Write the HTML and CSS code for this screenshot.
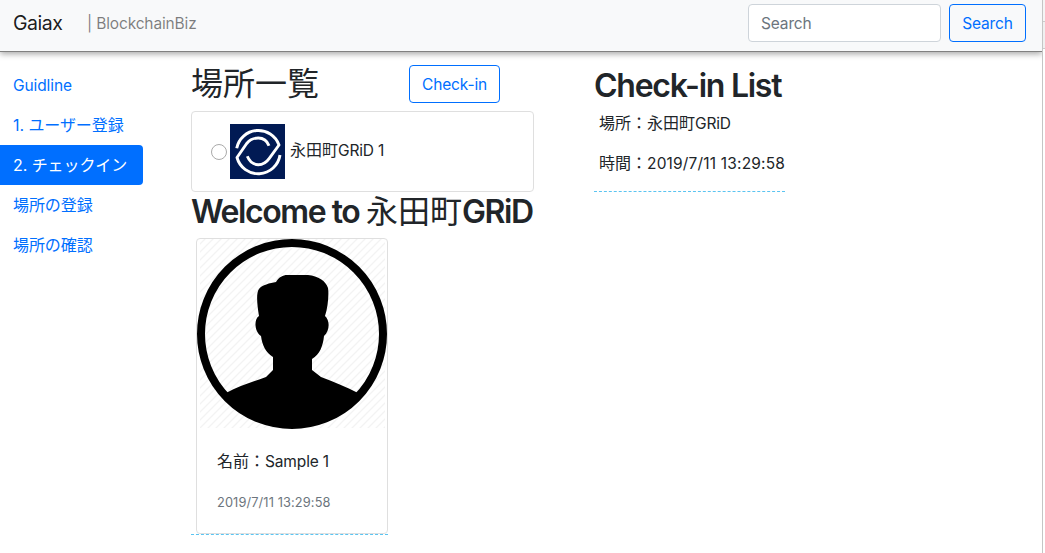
FILE: index.html
```html
<!DOCTYPE html>
<html lang="ja">
<head>
<meta charset="utf-8">
<title>Gaiax | BlockchainBiz</title>
<link rel="stylesheet" href="styles.css">
</head>
<body>
<div class="window">
  <div class="page">
    <header class="navbar">
      <a class="brand">Gaiax</a>
      <span class="tagline">| BlockchainBiz</span>
      <form class="search">
        <input class="search-input" type="text" placeholder="Search">
        <button class="btn" type="button">Search</button>
      </form>
    </header>
    <div class="columns">
      <nav class="sidebar">
        <a class="link guide">Guidline</a>
        <a class="link">1. ユーザー登録</a>
        <a class="link active">2. チェックイン</a>
        <a class="link">場所の登録</a>
        <a class="link">場所の確認</a>
      </nav>
      <main class="places">
        <div class="places-head">
          <h2 class="title jp">場所一覧</h2>
          <button class="btn checkin" type="button">Check-in</button>
        </div>
        <label class="place">
          <span class="radio"></span>
          <svg class="logo" viewBox="0 0 55 55">
            <rect width="55" height="55" fill="#011a54"/>
            <g fill="none" stroke="#fff" stroke-width="2.900" stroke-linejoin="round">
              <path d="M6.700 24.300A22 22 0 0 1 49 21L39.300 34.300C36 39 33 40.700 28.300 40.700C23.500 40.700 19.500 37.500 17.300 32.300"/>
              <path d="M50 31A22 22 0 0 1 7 33.500L16.700 19.500C20 15.500 23.500 14 28.300 14C33 14 37 16.500 39 21.700"/>
            </g>
          </svg>
          <span class="place-name"><span class="thin">永田町</span>GRiD 1</span>
        </label>
        <h2 class="title welcome">Welcome to <span class="thin">永田町</span>GRiD</h2>
        <div class="visitor">
          <div class="card">
            <svg class="avatar" viewBox="0 0 190 190">
              <defs>
                <pattern id="hatch" width="8" height="8" patternUnits="userSpaceOnUse">
                  <path d="M-2 2L2-2M0 8L8 0M6 10L10 6" stroke="#f3f3f3" stroke-width="1.300"/>
                </pattern>
                <clipPath id="disc"><circle cx="95" cy="95" r="94"/></clipPath>
              </defs>
              <rect x="3" width="185" height="189" fill="url(#hatch)"/>
              <circle cx="95" cy="95" r="91" fill="none" stroke="#000" stroke-width="8"/>
              <g clip-path="url(#disc)">
                <path d="M76 118C69 114 65 106 64 97C57 92 57 80 62 77C60 65 59 54 62 50C65 46 73 44 79 43C82 38 86 36 90 36H111C121 37 129 42 131 49C132 55 131 68 128 77C133 81 133 92 127 97C126 107 123 115 115 120V131L124 138C137 143 150 148 161 154L166 190H24L29 154C42 147 55 143 69 138L76 131Z"/>
              </g>
            </svg>
            <div class="card-body">
              <p class="visitor-name"><span class="thin">名前：</span>Sample 1</p>
              <small class="visitor-time">2019/7/11 13:29:58</small>
            </div>
          </div>
        </div>
      </main>
      <section class="history">
        <h2 class="title list-title">Check-in List</h2>
        <div class="entry">
          <p class="entry-row"><span class="thin">場所：永田町</span>GRiD</p>
          <p class="entry-row"><span class="thin">時間：</span><span class="stamp">2019/7/11 13:29:58</span></p>
        </div>
      </section>
    </div>
  </div>
  <aside class="edge"><div class="edge-top"></div><div class="edge-mid"></div></aside>
</div>
</body>
</html>
```
FILE: styles.css
```css
* { box-sizing: border-box; }
body { margin: 0; color: #212529; background: #fff; font: 400 15.500px/24px Inter, "Noto Sans CJK JP", sans-serif; letter-spacing: -0.150px; overflow: hidden; }
.window { display: flex; width: 1045px; height: 553px; }
.page { width: 1042px; overflow: hidden; }
.edge { width: 3px; border-left: 1px solid #c5c5c5; background: #fff; }
.edge-top { height: 22px; background: #f5f5f5; border-bottom: 1px solid #ccc; }
.edge-mid { height: 27px; background: #f0f0f0; border-bottom: 1px solid #ccc; }
.navbar { display: flex; align-items: center; height: 52px; padding: 0 16px 5px 13px; background: #f8f9fa; border-bottom: 1px solid #808080; box-shadow: 0 2px 6px rgba(0,0,0,.35); }
.brand { font-size: 19.500px; letter-spacing: -0.450px; color: rgba(0,0,0,.9); width: 74px; }
.tagline { color: rgba(0,0,0,.5); padding-top: 1px; }
.search { display: flex; gap: 8px; margin-left: auto; }
.search-input { width: 193px; height: 38px; padding: 0 12px; border: 1px solid #ced4da; border-radius: 4px; font: inherit; letter-spacing: inherit; background: #fff; }
.search-input::placeholder { color: #6c757d; opacity: 1; }
.btn { height: 38px; width: 77px; padding: 1px 0 0; border: 1px solid #006fff; border-radius: 4px; color: #006fff; background: transparent; font: inherit; letter-spacing: inherit; }
.columns { display: flex; align-items: flex-start; padding-top: 13px; }
.sidebar { width: 143px; display: flex; flex-direction: column; }
.link { height: 40px; padding: 8px 13px; color: #006fff; white-space: nowrap; font-size: 16px; letter-spacing: -0.080px; }
.guide { padding-top: 9px; font-size: 15.500px; letter-spacing: -0.100px; }
.active { color: #fff; background: #006fff; border-radius: 0 4px 4px 0; }
.places { width: 343px; margin-left: 48px; }
.places-head { display: flex; height: 46px; }
.title { margin: 0; padding-top: 1px; font-size: 32px; font-weight: 600; line-height: 38px; letter-spacing: -1.250px; white-space: nowrap; }
.jp { width: 218px; font-weight: 400; letter-spacing: 0; padding-top: 0; }
.list-title { padding-top: 2px; }
.thin { font-weight: 400; font-size: 16px; letter-spacing: 0; }
.title .thin { font-size: 32px; }
.checkin { width: 91px; }
.place { display: flex; align-items: center; height: 81px; padding: 0 19px; border: 1px solid #dfdfdf; border-radius: 4px; }
.radio { width: 16px; height: 16px; margin-right: 3px; border: 1px solid #aaa; border-radius: 50%; }
.logo { width: 55px; height: 55px; margin-right: 5px; }
.place-name { padding-bottom: 2px; }
.welcome { margin-bottom: 7px; letter-spacing: -1.430px; }
.visitor { width: 197px; padding-left: 5px; border-bottom: 1px dashed #5bc4f1; }
.card { width: 192px; height: 296px; border: 1px solid #dfdfdf; border-radius: 4px; }
.avatar { display: block; width: 190px; height: 190px; }
.card-body { padding: 20px; }
.visitor-name { margin: 0 0 17px; }
.visitor-time { display: block; font-size: 12.800px; letter-spacing: 0.120px; color: #6c757d; }
.history { margin-left: 60px; width: 191px; }
.entry { padding: 6px 0 0 5px; border-bottom: 1px dashed #5bc4f1; height: 87px; }
.entry-row { margin: 0 0 16px; white-space: nowrap; }
.entry-row + .entry-row { margin-top: -1px; }
.stamp { letter-spacing: 0.170px; }
```
